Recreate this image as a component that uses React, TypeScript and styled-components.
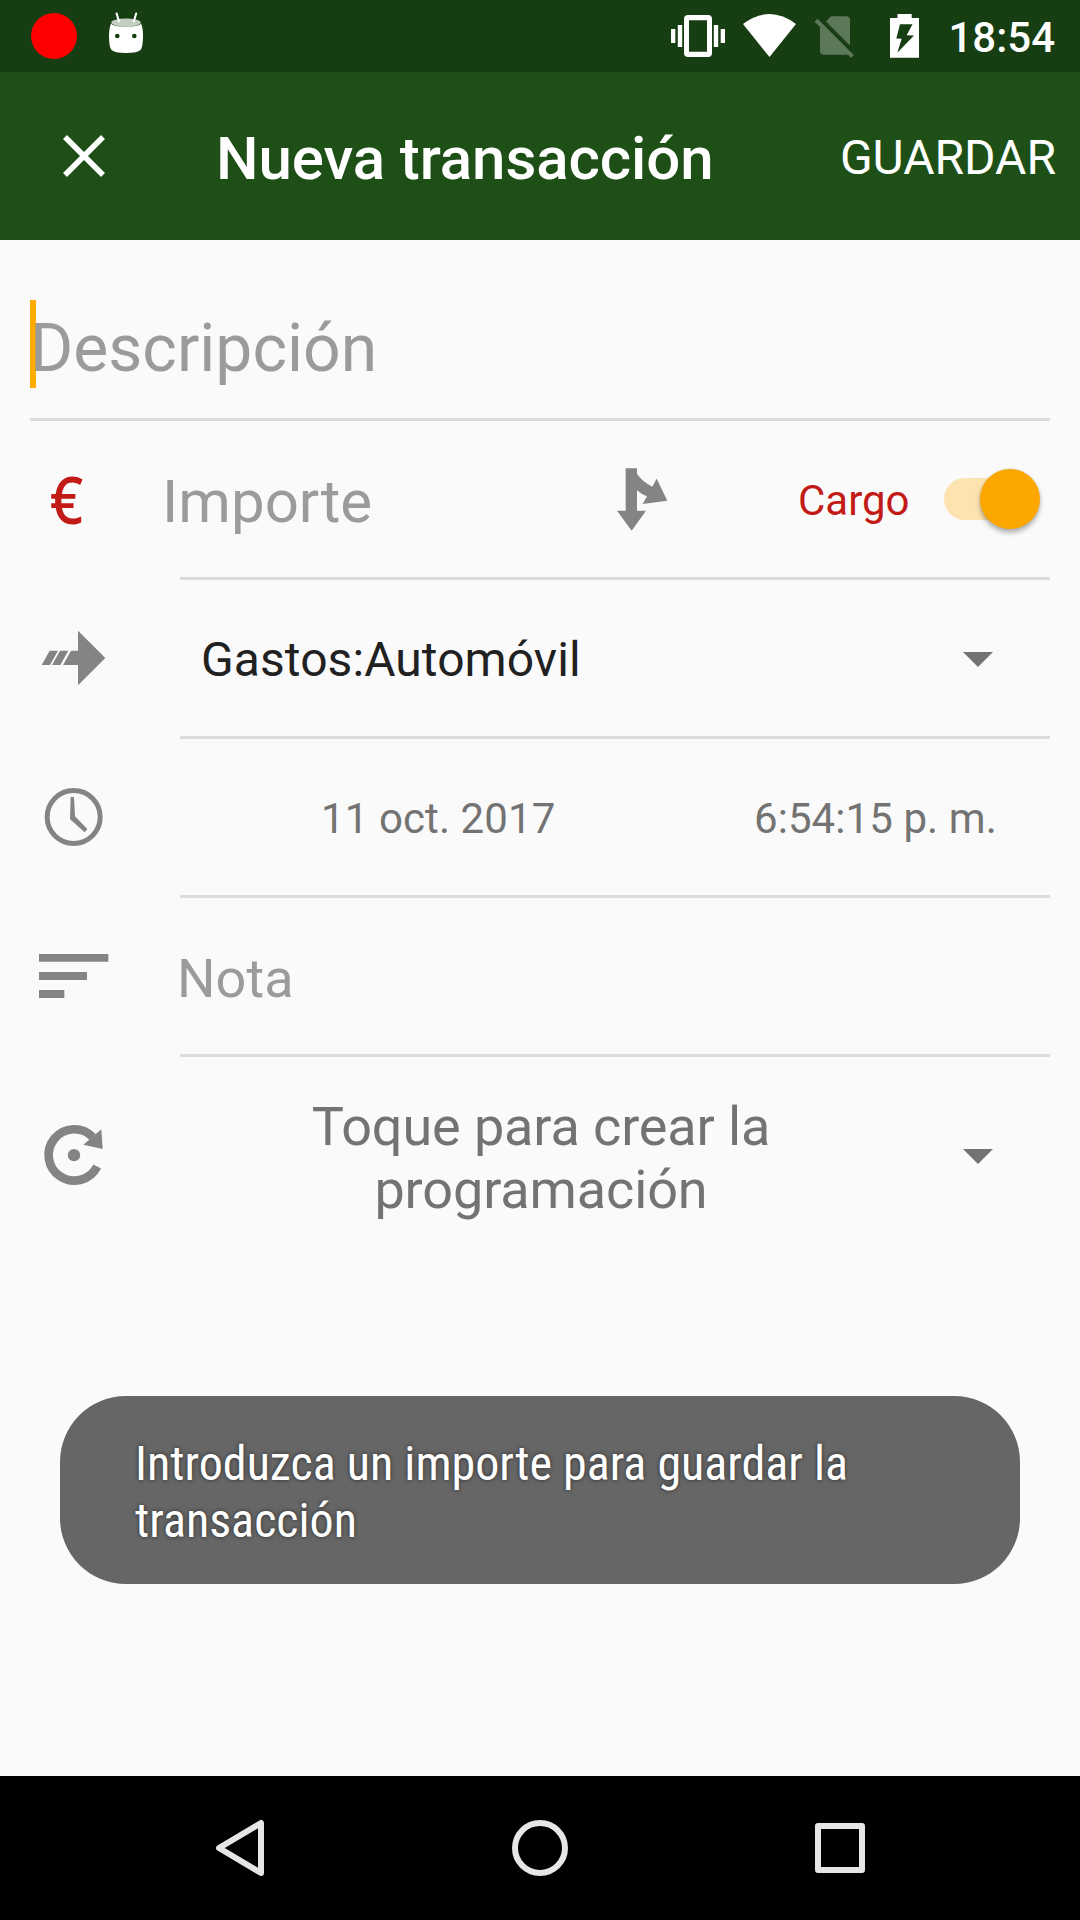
import React from "react";
import styled, { createGlobalStyle } from "styled-components";

const GlobalStyle = createGlobalStyle`
  * { box-sizing: border-box; }
  body { margin: 0; background: #fafafa; }
  svg { display: block; flex: none; }
`;

const Screen = styled.div`
  width: 1080px;
  height: 1920px;
  display: flex;
  flex-direction: column;
  overflow: hidden;
  background: #fafafa;
  color: #212121;
  font-family: Roboto, "Noto Sans", sans-serif;
  white-space: nowrap;
`;

const StatusBar = styled.header`
  height: 72px;
  flex: none;
  display: flex;
  align-items: center;
  justify-content: space-between;
  padding: 0 25px 0 31px;
  background: #173d12;
`;

const StatusGroup = styled.div`
  display: flex;
  align-items: center;
`;

const RecordDot = styled.span`
  width: 46px;
  height: 46px;
  margin-right: 31px;
  border-radius: 50%;
  background: #f00;
`;

const Clock = styled.span`
  margin-left: 28px;
  padding-top: 2px;
  font-size: 42px;
  font-weight: 500;
  color: #fff;
`;

const Toolbar = styled.div`
  height: 168px;
  flex: none;
  display: flex;
  align-items: center;
  padding: 0 24px 0 63px;
  background: #1d4f17;
  color: #fff;
`;

const Title = styled.h1`
  flex: 1;
  margin: 0 0 0 111px;
  padding-top: 5px;
  font-size: 60px;
  font-weight: 500;
  letter-spacing: -0.07px;
`;

const SaveButton = styled.button`
  border: 0;
  padding: 2px 0 0;
  background: none;
  color: inherit;
  font: 400 48px Roboto, sans-serif;
`;

const Form = styled.main`
  flex: 1;
  display: flex;
  flex-direction: column;
  padding: 0 30px;
`;

const DescriptionField = styled.div`
  height: 181px;
  display: flex;
  align-items: center;
  padding-top: 30px;
  border-bottom: 3px solid #dcdcdc;
`;

const Caret = styled.span`
  width: 6px;
  height: 88px;
  margin-right: -6px;
  background: #ffab00;
`;

const Row = styled.section<{ $height?: number }>`
  height: ${(p) => p.$height ?? 159}px;
  display: flex;
`;

const IconCell = styled.div<{ $inset?: number }>`
  width: 150px;
  flex: none;
  display: flex;
  align-items: center;
  padding: 0 0 3px ${(p) => p.$inset ?? 8}px;
`;

const RowBody = styled.div<{ $last?: boolean }>`
  flex: 1;
  display: flex;
  align-items: center;
  border-bottom: 3px solid ${(p) => (p.$last ? "transparent" : "#dcdcdc")};
`;

const Currency = styled.span`
  padding-top: 1px;
  font: 500 65px "Noto Sans", sans-serif;
  line-height: 1;
  color: #c21a17;
  transform: scaleX(0.9);
`;

const Label = styled.span<{
  $size: number;
  $color: string;
  $left?: number;
  $width?: number;
  $drop?: number;
  $tracking?: number;
}>`
  padding-top: ${(p) => p.$drop ?? 3}px;
  margin-left: ${(p) => p.$left ?? 0}px;
  ${(p) => (p.$width ? `width: ${p.$width}px; flex: none;` : "")}
  font-size: ${(p) => p.$size}px;
  letter-spacing: ${(p) => p.$tracking ?? 0}px;
  color: ${(p) => p.$color};
`;

const Schedule = styled(Label)`
  line-height: 63px;
  text-align: center;
`;

const Track = styled.span`
  width: 84px;
  height: 42px;
  margin-left: 34px;
  display: flex;
  align-items: center;
  justify-content: flex-end;
  border-radius: 21px;
  background: #fde3b0;
`;

const Thumb = styled.span`
  flex: none;
  width: 60px;
  height: 60px;
  margin-right: -12px;
  border-radius: 50%;
  background: #fba700;
  box-shadow: 0 4px 5px rgba(0, 0, 0, 0.28), 0 0 3px rgba(0, 0, 0, 0.12);
`;

const Chevron = styled.span`
  margin: 3px 57px 0 auto;
  border: 15px solid transparent;
  border-top-color: #737373;
  border-bottom: 0;
`;

const Toast = styled.div`
  width: 960px;
  height: 188px;
  margin: 140px 0 0 30px;
  padding: 39px 74px 0 75px;
  border-radius: 66px;
  background: #666;
  color: #fff;
  font: 400 48px "Roboto Condensed", Roboto, sans-serif;
  font-stretch: 75%;
  line-height: 57px;
  letter-spacing: 0.02px;
  text-shadow: 0 0 4px rgba(0, 0, 0, 0.6);
`;

const NavBar = styled.nav`
  height: 144px;
  flex: none;
  display: flex;
  align-items: center;
  justify-content: center;
  gap: 240px;
  background: #000;
`;

const GRAY = "#848484";
const HINT = "#9b9b9b";
const MUTED = "#737373";

const DebugIcon = () => (
  <svg width="36" height="48" viewBox="108 12 36 48" fill="#fff">
    <path d="M116.6 13.4l2.3 8M136.2 13.4l-2.3 8" stroke="#fff" strokeWidth="2" strokeLinecap="round" />
    <ellipse cx="126" cy="22.6" rx="14.8" ry="4" opacity=".75" />
    <path
      fillRule="evenodd"
      d="M111 23.5Q112 26.6 126 26.6T141 23.5Q143.2 28 143 37Q142.8 46 141 49.5Q138 53 126 53T111 49.5Q109.200 46 109 37Q109 28 111 23.5ZM117.300 33.700a2.300 2.300 0 100 4.600a2.300 2.300 0 000-4.600ZM134.300 33.700a2.300 2.300 0 100 4.600a2.300 2.300 0 000-4.600Z"
    />
  </svg>
);

const SystemIcons = () => (
  <svg width="250" height="48" viewBox="670 12 250 48" fill="#fff">
    <path d="M671 29h4.300v14H671ZM677.800 25h4.400v22h-4.400ZM713.800 25h4.400v22h-4.400ZM720.700 29h4.300v14h-4.300Z" />
    <path
      fillRule="evenodd"
      d="M688 15h20q4 0 4 4v34q0 4-4 4h-20q-4 0-4-4V19q0-4 4-4ZM689 20.300v31.500h18V20.300Z"
    />
    <path d="M743 24Q769.500 4 796 24L769.500 57Z" />
    <path
      opacity=".3"
      d="M814.500 21.700l3-3L853.700 55l-2.600 3L848 54.800H824q-4 0-4-4V27ZM826 21.500l5-5.200H846q4 0 4 4V45.500Z"
    />
    <path
      fillRule="evenodd"
      d="M890 18h7.500v-4h14.200v4H919v39.700H890ZM900 24.300L896.300 38.400L901.700 38.800L897.300 52.700L914 35.600L906.700 35.200L912.500 24.300Z"
    />
  </svg>
);

const CloseIcon = () => (
  <svg width="42" height="42" viewBox="0 0 42 42">
    <path d="M2 2L40 40M40 2L2 40" stroke="#fff" strokeWidth="5.600" />
  </svg>
);

const SplitIcon = () => (
  <svg width="51" height="63" viewBox="111 82 153 189" fill={GRAY}>
    <path d="M137 83H171V100Q190 126 217 138L230 114L262 180L188 190L201 167Q184 161 171 149V210H198L155 270L111 210H137Z" />
  </svg>
);

const TransferIcon = () => (
  <svg width="72" height="72" viewBox="114 66 216 216" fill={GRAY}>
    <path d="M234 92L316 174L234 256V195H189L213 152H234ZM180 152H205L181 195H156ZM149 152H174L150 195H125Z" />
  </svg>
);

const ClockIcon = () => (
  <svg width="72" height="72" viewBox="114 543 216 216" fill={GRAY}>
    <circle cx="221" cy="651" r="79.500" fill="none" stroke={GRAY} strokeWidth="15" />
    <path d="M212 591H222L225 649L262 687L254 697L210 658Z" />
  </svg>
);

const NotesIcon = () => (
  <svg width="72" height="72" viewBox="114 60 216 216" fill={GRAY}>
    <path d="M117 102H325V125H117ZM117 156H261V180H117ZM117 210H193V234H117Z" />
  </svg>
);

const RepeatIcon = () => (
  <svg width="72" height="72" viewBox="114 597 216 216" fill={GRAY}>
    <path d="M291.600 739.500A77 77 0 1 1 278 651" fill="none" stroke={GRAY} strokeWidth="26" />
    <path d="M304 628L308 687L250 674Z" />
    <circle cx="222" cy="705.500" r="18.500" />
  </svg>
);

const NavIcon = ({ children }: { children: React.ReactNode }) => (
  <svg width="60" height="60" viewBox="0 0 60 60" fill="none" stroke="#e6e6e6" strokeWidth="6" strokeLinejoin="round">
    {children}
  </svg>
);

export default function App() {
  return (
    <Screen>
      <GlobalStyle />
      <StatusBar>
        <StatusGroup>
          <RecordDot />
          <DebugIcon />
        </StatusGroup>
        <StatusGroup>
          <SystemIcons />
          <Clock>18:54</Clock>
        </StatusGroup>
      </StatusBar>
      <Toolbar>
        <CloseIcon />
        <Title>Nueva transacción</Title>
        <SaveButton>GUARDAR</SaveButton>
      </Toolbar>
      <Form>
        <DescriptionField>
          <Caret />
          <Label $size={66} $color={HINT} $drop={8}>Descripción</Label>
        </DescriptionField>
        <Row>
          <IconCell $inset={18}>
            <Currency>€</Currency>
          </IconCell>
          <RowBody>
            <Label $size={60} $color={HINT} $left={-18} $width={455} $drop={4}>Importe</Label>
            <SplitIcon />
            <Label $size={42} $color="#c21a17" $left={130}>Cargo</Label>
            <Track>
              <Thumb />
            </Track>
          </RowBody>
        </Row>
        <Row>
          <IconCell>
            <TransferIcon />
          </IconCell>
          <RowBody>
            <Label $size={48} $color="#212121" $left={21} $tracking={0.08}>Gastos:Automóvil</Label>
            <Chevron />
          </RowBody>
        </Row>
        <Row>
          <IconCell>
            <ClockIcon />
          </IconCell>
          <RowBody>
            <Label $size={42} $color={MUTED} $left={141} $width={433} $tracking={0.1}>11 oct. 2017</Label>
            <Label $size={42} $color={MUTED} $tracking={0.08}>6:54:15 p. m.</Label>
          </RowBody>
        </Row>
        <Row>
          <IconCell>
            <NotesIcon />
          </IconCell>
          <RowBody>
            <Label $size={54} $color={HINT} $left={-3} $drop={5} $tracking={0.1}>Nota</Label>
          </RowBody>
        </Row>
        <Row $height={199}>
          <IconCell>
            <RepeatIcon />
          </IconCell>
          <RowBody $last>
            <Schedule $size={54} $color={MUTED} $width={722} $drop={5} $tracking={-0.12}>
              Toque para crear la
              <br />
              programación
            </Schedule>
            <Chevron />
          </RowBody>
        </Row>
        <Toast>
          Introduzca un importe para guardar la
          <br />
          transacción
        </Toast>
      </Form>
      <NavBar>
        <NavIcon>
          <path d="M51 5V55L9 30Z" />
        </NavIcon>
        <NavIcon>
          <circle cx="30" cy="30" r="25" />
        </NavIcon>
        <NavIcon>
          <path d="M8 8H52V52H8Z" />
        </NavIcon>
      </NavBar>
    </Screen>
  );
}
